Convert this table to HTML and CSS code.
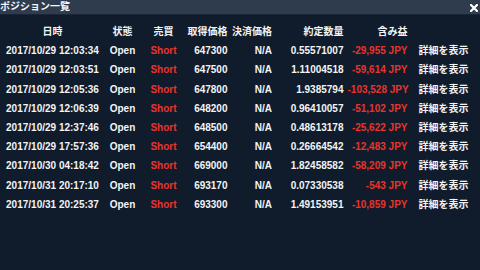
FILE: index.html
```html
<!DOCTYPE html>
<html lang="ja">
<head>
<meta charset="utf-8">
<title>ポジション一覧</title>
<link rel="stylesheet" href="styles.css">
</head>
<body>
<div class="window">
  <div class="titlebar">
    <span class="title">ポジション一覧</span>
    <svg class="close" viewBox="0 0 8 8" width="8" height="8" aria-label="閉じる"><path d="M1 1L7 7M7 1L1 7" stroke="#ffffff" stroke-width="2.2" stroke-linecap="square"/></svg>
  </div>
  <div class="content">
    <table class="positions">
      <colgroup>
        <col class="c-date"><col class="c-status"><col class="c-side"><col class="c-entry"><col class="c-exit"><col class="c-qty"><col class="c-pl"><col class="c-detail">
      </colgroup>
      <thead>
        <tr>
          <th class="ctr">日時</th>
          <th class="ctr">状態</th>
          <th class="ctr">売買</th>
          <th class="num">取得価格</th>
          <th class="num">決済価格</th>
          <th class="num">約定数量</th>
          <th class="num pl-h">含み益</th>
          <th class="det"></th>
        </tr>
      </thead>
      <tbody>
        <tr><td class="ctr">2017/10/29 12:03:34</td><td class="ctr">Open</td><td class="ctr red">Short</td><td class="num">647300</td><td class="num">N/A</td><td class="num">0.55571007</td><td class="num pl red">-29,955 JPY</td><td class="det">詳細を表示</td></tr>
        <tr><td class="ctr">2017/10/29 12:03:51</td><td class="ctr">Open</td><td class="ctr red">Short</td><td class="num">647500</td><td class="num">N/A</td><td class="num">1.11004518</td><td class="num pl red">-59,614 JPY</td><td class="det">詳細を表示</td></tr>
        <tr><td class="ctr">2017/10/29 12:05:36</td><td class="ctr">Open</td><td class="ctr red">Short</td><td class="num">647800</td><td class="num">N/A</td><td class="num">1.9385794</td><td class="num pl red">-103,528 JPY</td><td class="det">詳細を表示</td></tr>
        <tr><td class="ctr">2017/10/29 12:06:39</td><td class="ctr">Open</td><td class="ctr red">Short</td><td class="num">648200</td><td class="num">N/A</td><td class="num">0.96410057</td><td class="num pl red">-51,102 JPY</td><td class="det">詳細を表示</td></tr>
        <tr><td class="ctr">2017/10/29 12:37:46</td><td class="ctr">Open</td><td class="ctr red">Short</td><td class="num">648500</td><td class="num">N/A</td><td class="num">0.48613178</td><td class="num pl red">-25,622 JPY</td><td class="det">詳細を表示</td></tr>
        <tr><td class="ctr">2017/10/29 17:57:36</td><td class="ctr">Open</td><td class="ctr red">Short</td><td class="num">654400</td><td class="num">N/A</td><td class="num">0.26664542</td><td class="num pl red">-12,483 JPY</td><td class="det">詳細を表示</td></tr>
        <tr><td class="ctr">2017/10/30 04:18:42</td><td class="ctr">Open</td><td class="ctr red">Short</td><td class="num">669000</td><td class="num">N/A</td><td class="num">1.82458582</td><td class="num pl red">-58,209 JPY</td><td class="det">詳細を表示</td></tr>
        <tr><td class="ctr">2017/10/31 20:17:10</td><td class="ctr">Open</td><td class="ctr red">Short</td><td class="num">693170</td><td class="num">N/A</td><td class="num">0.07330538</td><td class="num pl red">-543 JPY</td><td class="det">詳細を表示</td></tr>
        <tr><td class="ctr">2017/10/31 20:25:37</td><td class="ctr">Open</td><td class="ctr red">Short</td><td class="num">693300</td><td class="num">N/A</td><td class="num">1.49153951</td><td class="num pl red">-10,859 JPY</td><td class="det">詳細を表示</td></tr>
      </tbody>
    </table>
  </div>
</div>
</body>
</html>
```

FILE: styles.css
```css
html, body {
  margin: 0;
  padding: 0;
  background: #101c2b;
}
body {
  width: 480px;
  height: 270px;
  overflow: hidden;
  font-family: "Liberation Sans", "Noto Sans CJK JP", sans-serif;
  font-weight: bold;
  font-size: 10px;
  color: #f2f4f6;
}
.window {
  width: 480px;
  height: 270px;
  background: #101c2b;
}
.titlebar {
  height: 14px;
  background: #2e3c4e;
  border-bottom: 1px solid #1a2636;
  display: flex;
  align-items: center;
  justify-content: space-between;
  padding: 0 2px 0 0;
}
.title {
  font-size: 10px;
  line-height: 14px;
  color: #f4f6f8;
}
.close {
  display: block;
  margin-top: 1px;
}
.content {
  padding-top: 7px;
}
.positions {
  border-collapse: collapse;
  border-spacing: 0;
  table-layout: fixed;
  width: 480px;
}
.c-date { width: 105px; }
.c-status { width: 35px; }
.c-side { width: 47px; }
.c-entry { width: 44.5px; }
.c-exit { width: 44.5px; }
.c-qty { width: 71.5px; }
.c-pl { width: 64px; }
.c-detail { width: 68.5px; }
.positions th,
.positions td {
  padding: 0;
  height: 19.2px;
  line-height: 19.2px;
  white-space: nowrap;
  font-weight: bold;
  overflow: visible;
}
.positions .ctr { text-align: center; }
.positions .num { text-align: right; padding-right: 4px; }
.positions .det { text-align: left; padding-left: 7px; }
.red { color: #e8342c; }
```
